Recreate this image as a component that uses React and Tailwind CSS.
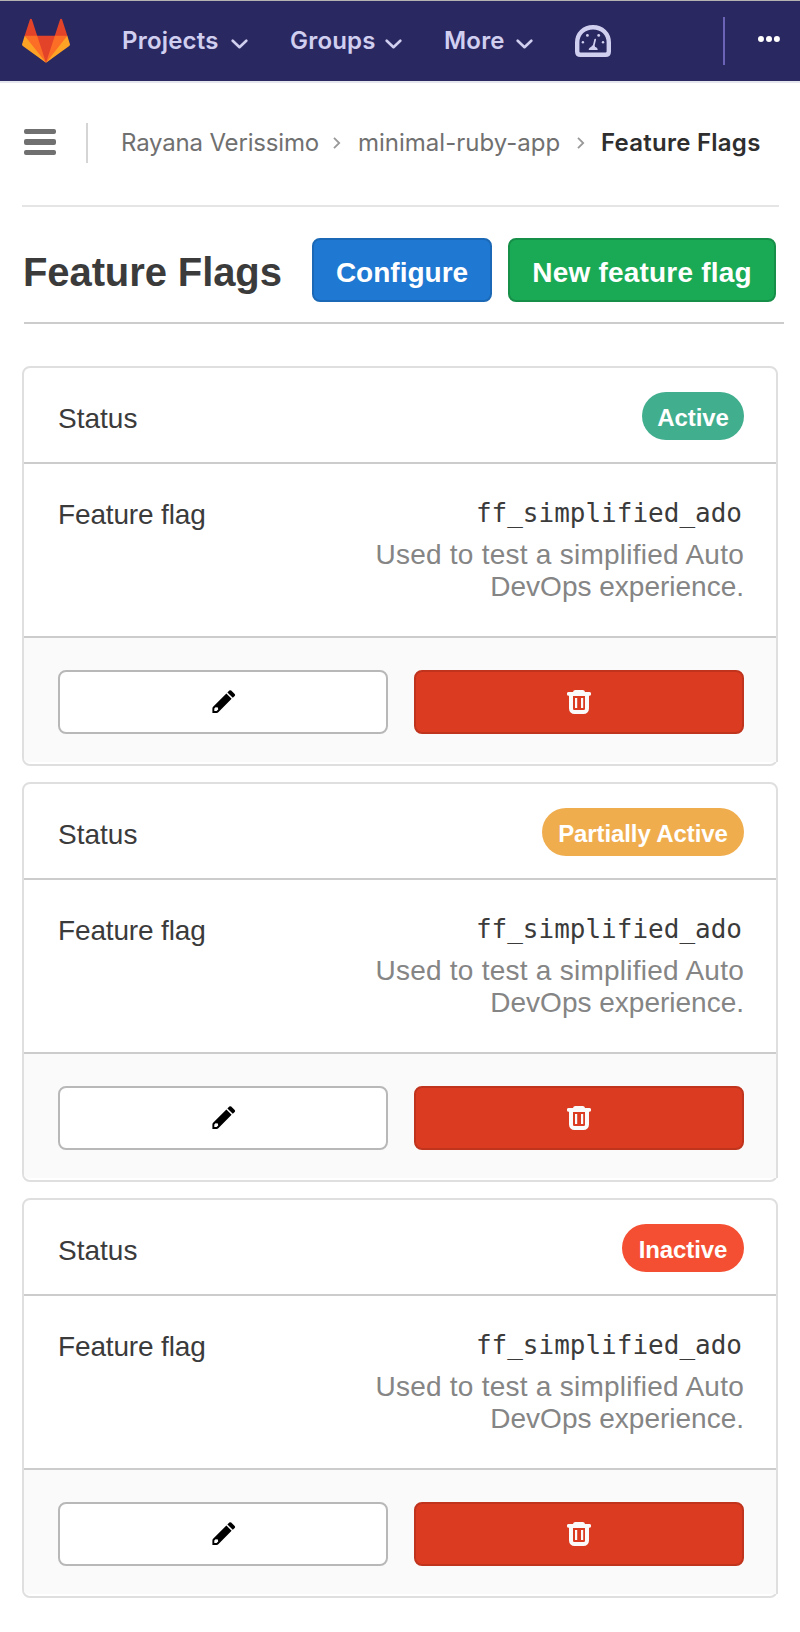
const flags = [
  { label: "Active", badge: "bg-[#41ae8e] w-[102px]" },
  { label: "Partially Active", badge: "bg-[#f0ad4e] w-[202px]" },
  { label: "Inactive", badge: "bg-[#f44f32] w-[122px]" },
];

function Tanuki() {
  return (
    <svg className="h-12 w-12 shrink-0" viewBox="0 0 36 36">
      <path fill="#e24329" d="M2 14l9.38 9v-9l-4-12.28c-.205-.632-1.176-.632-1.38 0z" />
      <path fill="#e24329" d="M34 14l-9.38 9v-9l4-12.28c.205-.632 1.176-.632 1.38 0z" />
      <path fill="#e24329" d="M18 34.38L3 14h30z" />
      <path fill="#fc6d26" d="M18 34.38L11.38 14H2l4 11z" />
      <path fill="#fc6d26" d="M18 34.38L24.62 14H34l-4 11z" />
      <path fill="#fca326" d="M2 14L.1 20.16c-.18.565 0 1.2.5 1.56l17.42 12.66z" />
      <path fill="#fca326" d="M34 14l1.9 6.16c.18.565 0 1.2-.5 1.56L18 34.38z" />
    </svg>
  );
}

function NavItem({ children, width }) {
  return (
    <div className={`flex shrink-0 items-center justify-between ${width}`}>
      <span className="tracking-[0.2px] whitespace-nowrap">{children}</span>
      <svg className="mt-[6px] h-[10px] w-[17px]" viewBox="0 0 17 10" fill="none" stroke="currentColor" strokeWidth="2.6" strokeLinecap="round" strokeLinejoin="round">
        <path d="M1.7 1.7L8.5 8.2L15.3 1.7" />
      </svg>
    </div>
  );
}

function Gauge() {
  return (
    <svg className="ml-[42px] h-8 w-9 shrink-0" viewBox="0 0 36 32" fill="currentColor">
      <path d="M2.2 17.5C2.2 8.5 9 2.2 18 2.2S33.8 8.5 33.8 17.5V26.5Q33.8 29.8 30.5 29.8H5.5Q2.2 29.8 2.2 26.5Z" fill="none" stroke="currentColor" strokeWidth="4.4" />
      <circle cx="12.4" cy="10.4" r="1.4" />
      <circle cx="23.7" cy="10.4" r="1.4" />
      <circle cx="7.9" cy="17.2" r="1.2" />
      <circle cx="28" cy="17.2" r="1.2" />
      <path d="M20.2 14.5L18.6 21" stroke="currentColor" strokeWidth="1.7" strokeLinecap="round" />
      <path d="M13.7 25C13.7 23.3 15 22.3 16.2 22L17 20.5H19.5L20.2 22C21.5 22.3 22.7 23.3 22.7 25Z" />
    </svg>
  );
}

function Separator({ className }) {
  return (
    <svg className={`h-3 w-2 shrink-0 ${className}`} viewBox="0 0 8 12" fill="none" stroke="#999" strokeWidth="1.8">
      <path d="M1 0.8L6.2 6L1 11.2" />
    </svg>
  );
}

function Pencil() {
  return (
    <svg className="ml-[2px] h-6 w-6" viewBox="0 0 24 24">
      <path d="M15.4 2.5L17.3 0.6Q18.2 -0.2 19.2 0.6L22.7 4Q23.5 5 22.7 5.9L20.8 7.8Z" />
      <path fillRule="evenodd" d="M14.4 3.5L19.6 8.7L6.3 22.2Q5.6 22.9 4.6 22.9H0.4V18.4Q0.4 17.5 1.1 16.8ZM3.6 17.2L2.3 18.6V21H4.6L6.2 19.6L5.9 17.5Z" />
    </svg>
  );
}

function Trash() {
  return (
    <svg className="h-6 w-6" viewBox="0 0 24 24" fill="#fafafa">
      <path fillRule="evenodd" d="M6 2Q6.3 0 8.3 0H15.7Q17.7 0 18 2H22.5A1.5 1.8 0 0 1 22.5 5.7H22V18.5A5.5 5.5 0 0 1 16.5 24H7.5A5.5 5.5 0 0 1 2 18.5V5.7H1.5A1.5 1.8 0 0 1 1.5 2ZM6 6V18.8Q6 20 7.2 20H16.8Q18 20 18 18.8V6Z" />
      <path d="M8 8H10.2V18H8ZM14 8H16.2V18H14Z" />
    </svg>
  );
}

function FlagCard({ flag }) {
  return (
    <section className="h-[400px] rounded-lg border-2 border-[#dfdfdf] text-[28px] leading-8 text-[#3b3b3b]">
      <div className="flex h-24 items-center justify-between border-b-2 border-[#ccc] pt-[2px] pr-8 pl-[34px]">
        <span className="pt-[6px]">Status</span>
        <span className={`flex h-12 items-center justify-center rounded-full pt-1 text-2xl leading-none font-bold tracking-[-0.1px] whitespace-nowrap text-white ${flag.badge}`}>
          {flag.label}
        </span>
      </div>
      <div className="flex h-[174px] justify-between border-b-2 border-[#ccc] pt-[35px] pr-8 pl-[34px]">
        <span className="tracking-[-0.15px]">Feature flag</span>
        <div className="text-right">
          <div className="-mt-px mr-[2px] h-[41px] font-['DejaVu_Sans_Mono',monospace] text-[26px] leading-[30px]">ff_simplified_ado</div>
          <p className="text-[#858585]">
            <span className="tracking-[0.25px]">Used to test a simplified Auto</span>
            <br />
            DevOps experience.
          </p>
        </div>
      </div>
      <div className="-mr-[2px] flex h-[124px] gap-[26px] rounded-bl border-r-2 border-[#dfdfdf] bg-[#fafafa] pt-8 pl-[34px]">
        <button aria-label="Edit" className="flex h-16 w-[330px] items-center justify-center rounded-lg border-2 border-[#b8b8b8] bg-white text-black">
          <Pencil />
        </button>
        <button aria-label="Delete" className="flex h-16 w-[330px] items-center justify-center rounded-lg border-2 border-[#c0341d] bg-[#db3b21]">
          <Trash />
        </button>
      </div>
    </section>
  );
}

export default function App() {
  return (
    <div className="h-[1632px] w-[800px] overflow-hidden bg-white font-['Liberation_Sans',Arial,sans-serif]">
      <nav className="flex h-[83px] items-center border-t border-b-2 border-t-[#b3b3b3] border-b-[#e6e6ee] bg-[#2a2860] pr-5 pl-[22px] font-['Inter',sans-serif] text-2xl font-semibold text-[#d1cff0]">
        <Tanuki />
        <div className="ml-[52px] flex gap-[42px]">
          <NavItem width="w-[126px]">Projects</NavItem>
          <NavItem width="w-[112px]">Groups</NavItem>
          <NavItem width="w-[89px]">More</NavItem>
        </div>
        <Gauge />
        <div className="ml-auto h-12 w-[2px] bg-[#6b63b5]" />
        <svg className="mb-1 ml-[33px] h-[6px] w-[22px]" viewBox="0 0 22 6" fill="#fff">
          <circle cx="3" cy="3" r="3" />
          <circle cx="11" cy="3" r="3" />
          <circle cx="18.9" cy="3" r="3" />
        </svg>
      </nav>
      <div className="ml-[22px] flex h-[124px] w-[757px] items-center border-b-2 border-[#e5e5e5] pb-[2px] font-['Inter',sans-serif] text-2xl text-[#707070]">
        <div className="-mt-[2px] ml-[2px] flex w-8 shrink-0 flex-col gap-[5px]">
          <div className="h-[5.5px] rounded-[2px] bg-[#707070]" />
          <div className="h-[5.5px] rounded-[2px] bg-[#707070]" />
          <div className="h-[5.5px] rounded-[2px] bg-[#707070]" />
        </div>
        <div className="ml-[30px] h-10 w-[2px] shrink-0 bg-[#d5d5d5]" />
        <span className="ml-[33px] w-[197px] shrink-0 tracking-[-0.18px] whitespace-nowrap">Rayana Verissimo</span>
        <Separator className="mr-[17px] ml-[15px]" />
        <span className="w-[202px] shrink-0 whitespace-nowrap">minimal-ruby-app</span>
        <Separator className="mr-4 ml-[17px]" />
        <span className="shrink-0 font-semibold tracking-[0.25px] whitespace-nowrap text-[#2e2e2e]">Feature Flags</span>
      </div>
      <header className="ml-6 flex h-[117px] w-[760px] items-center border-b-2 border-[#ccc] pt-[31px] pr-2 pb-5">
        <h1 className="-ml-px flex-1 pt-1 text-[40px] leading-none font-bold tracking-[-0.1px] whitespace-nowrap text-[#3b3b3b]">Feature Flags</h1>
        <button className="h-16 w-[180px] rounded-lg border-2 border-[#1b69b6] bg-[#1f78d1] pt-[6px] text-[28px] leading-none font-bold text-white">Configure</button>
        <button className="ml-4 h-16 w-[268px] rounded-lg border-2 border-[#168f48] bg-[#1aaa55] pt-[6px] text-[28px] leading-none font-bold tracking-[0.2px] text-white">New feature flag</button>
      </header>
      <main className="mt-[42px] ml-[22px] flex w-[756px] flex-col gap-4">
        {flags.map((flag) => (
          <FlagCard key={flag.label} flag={flag} />
        ))}
      </main>
    </div>
  );
}
